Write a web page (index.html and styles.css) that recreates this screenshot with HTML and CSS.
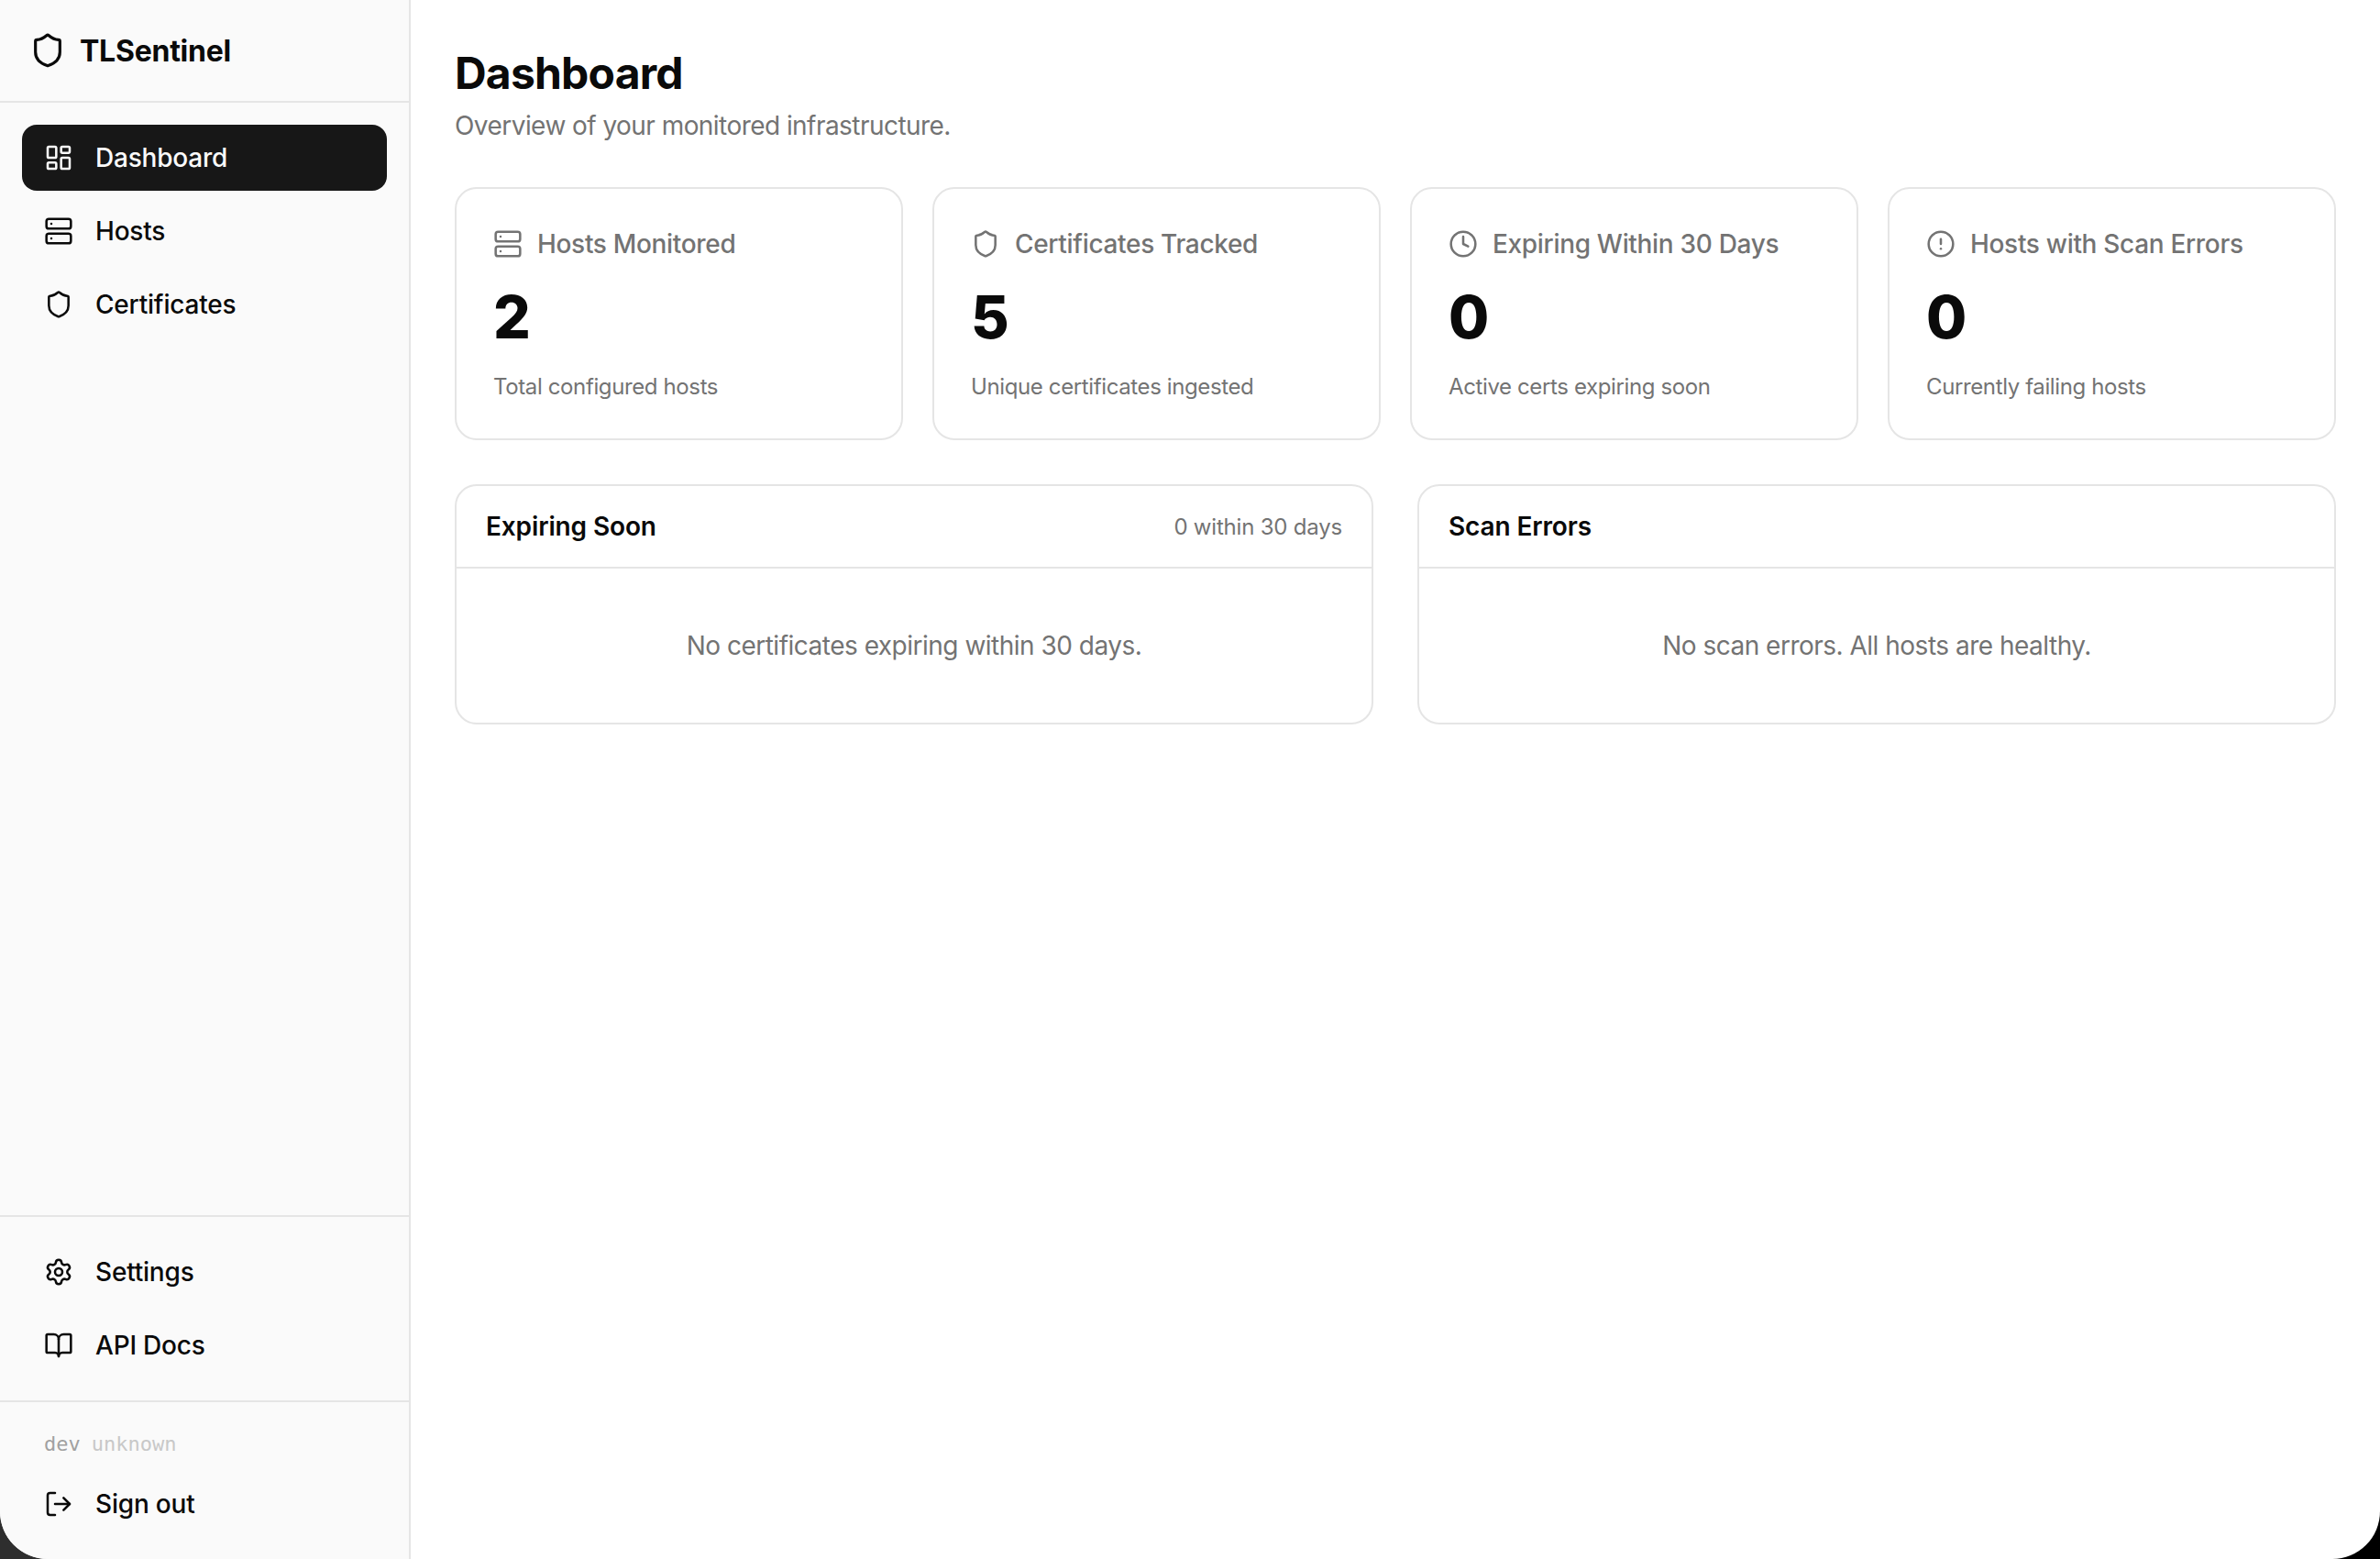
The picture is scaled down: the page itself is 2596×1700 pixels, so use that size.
FILE: index.html
```html
<!DOCTYPE html>
<html lang="en">
<head>
<meta charset="utf-8">
<title>TLSentinel</title>
<link rel="stylesheet" href="styles.css">
</head>
<body>
<svg class="sprite" aria-hidden="true">
  <symbol id="i-dashboard" viewBox="0 0 24 24"><rect width="7" height="9" x="3" y="3" rx="1"/><rect width="7" height="5" x="14" y="3" rx="1"/><rect width="7" height="9" x="14" y="12" rx="1"/><rect width="7" height="5" x="3" y="16" rx="1"/></symbol>
  <symbol id="i-server" viewBox="0 0 24 24"><rect width="20" height="8" x="2" y="2" rx="2"/><rect width="20" height="8" x="2" y="14" rx="2"/><line x1="6" x2="6.01" y1="6" y2="6"/><line x1="6" x2="6.01" y1="18" y2="18"/></symbol>
  <symbol id="i-shield" viewBox="0 0 24 24"><path d="M20 13c0 5-3.5 7.5-7.66 8.95a1 1 0 0 1-.67-.01C7.5 20.5 4 18 4 13V6a1 1 0 0 1 1-1c2 0 4.5-1.2 6.24-2.72a1.17 1.17 0 0 1 1.52 0C14.51 3.81 17 5 19 5a1 1 0 0 1 1 1z"/></symbol>
  <symbol id="i-clock" viewBox="0 0 24 24"><circle cx="12" cy="12" r="10"/><polyline points="12 6 12 12 16 14"/></symbol>
  <symbol id="i-alert" viewBox="0 0 24 24"><circle cx="12" cy="12" r="10"/><line x1="12" x2="12" y1="8" y2="12"/><line x1="12" x2="12.01" y1="16" y2="16"/></symbol>
  <symbol id="i-settings" viewBox="0 0 24 24"><path d="M9.671 4.136a2.34 2.34 0 0 1 4.659 0 2.34 2.34 0 0 0 3.319 1.915 2.34 2.34 0 0 1 2.33 4.033 2.34 2.34 0 0 0 0 3.831 2.34 2.34 0 0 1-2.33 4.033 2.34 2.34 0 0 0-3.319 1.915 2.34 2.34 0 0 1-4.659 0 2.34 2.34 0 0 0-3.32-1.915 2.34 2.34 0 0 1-2.33-4.033 2.34 2.34 0 0 0 0-3.831A2.34 2.34 0 0 1 6.35 6.051a2.34 2.34 0 0 0 3.319-1.915"/><circle cx="12" cy="12" r="3"/></symbol>
  <symbol id="i-book" viewBox="0 0 24 24"><path d="M12 7v14"/><path d="M3 18a1 1 0 0 1-1-1V4a1 1 0 0 1 1-1h5a4 4 0 0 1 4 4 4 4 0 0 1 4-4h5a1 1 0 0 1 1 1v13a1 1 0 0 1-1 1h-6a3 3 0 0 0-3 3 3 3 0 0 0-3-3z"/></symbol>
  <symbol id="i-logout" viewBox="0 0 24 24"><path d="m16 17 5-5-5-5"/><path d="M21 12H9"/><path d="M9 21H5a2 2 0 0 1-2-2V5a2 2 0 0 1 2-2h4"/></symbol>
</svg>
<div class="app">
  <aside class="sidebar">
    <div class="brand">
      <svg class="icon icon-brand"><use href="#i-shield"/></svg>
      <span class="brand-name">TLSentinel</span>
    </div>
    <nav class="nav nav-main">
      <a class="nav-item is-active"><svg class="icon"><use href="#i-dashboard"/></svg><span>Dashboard</span></a>
      <a class="nav-item"><svg class="icon"><use href="#i-server"/></svg><span>Hosts</span></a>
      <a class="nav-item"><svg class="icon"><use href="#i-shield"/></svg><span>Certificates</span></a>
    </nav>
    <nav class="nav nav-secondary">
      <a class="nav-item"><svg class="icon"><use href="#i-settings"/></svg><span>Settings</span></a>
      <a class="nav-item"><svg class="icon"><use href="#i-book"/></svg><span>API Docs</span></a>
    </nav>
    <div class="account">
      <div class="build"><span class="build-env">dev</span><span class="build-ver">unknown</span></div>
      <a class="nav-item"><svg class="icon"><use href="#i-logout"/></svg><span>Sign out</span></a>
    </div>
  </aside>
  <main class="main">
    <header class="page-head">
      <h1 class="page-title">Dashboard</h1>
      <p class="page-sub">Overview of your monitored infrastructure.</p>
    </header>
    <section class="stats">
      <article class="stat">
        <div class="stat-label"><svg class="icon"><use href="#i-server"/></svg><span>Hosts Monitored</span></div>
        <div class="stat-value">2</div>
        <div class="stat-desc">Total configured hosts</div>
      </article>
      <article class="stat">
        <div class="stat-label"><svg class="icon"><use href="#i-shield"/></svg><span>Certificates Tracked</span></div>
        <div class="stat-value">5</div>
        <div class="stat-desc">Unique certificates ingested</div>
      </article>
      <article class="stat">
        <div class="stat-label"><svg class="icon"><use href="#i-clock"/></svg><span>Expiring Within 30 Days</span></div>
        <div class="stat-value">0</div>
        <div class="stat-desc">Active certs expiring soon</div>
      </article>
      <article class="stat">
        <div class="stat-label"><svg class="icon"><use href="#i-alert"/></svg><span>Hosts with Scan Errors</span></div>
        <div class="stat-value">0</div>
        <div class="stat-desc">Currently failing hosts</div>
      </article>
    </section>
    <section class="panels">
      <article class="panel">
        <div class="panel-head"><h2 class="panel-title">Expiring Soon</h2><span class="panel-meta">0 within 30 days</span></div>
        <p class="panel-empty">No certificates expiring within 30 days.</p>
      </article>
      <article class="panel">
        <div class="panel-head"><h2 class="panel-title">Scan Errors</h2></div>
        <p class="panel-empty">No scan errors. All hosts are healthy.</p>
      </article>
    </section>
  </main>
</div>
</body>
</html>
```
FILE: styles.css
```css
* { box-sizing: border-box; }
html, body { margin: 0; height: 100%; }
body {
  background: linear-gradient(90deg, #2e2e2e 0, #2e2e2e 40px, #000 80px);
  color: #0a0a0a;
  font-family: "Inter", "Liberation Sans", sans-serif;
  overflow: hidden;
}
.sprite { display: none; }
.icon {
  width: 32px;
  height: 32px;
  flex: none;
  fill: none;
  stroke: currentColor;
  stroke-width: 1.9;
  stroke-linecap: round;
  stroke-linejoin: round;
}
.app {
  display: flex;
  height: 1700px;
  background: #fff;
  border-radius: 0 0 52px 52px;
  overflow: hidden;
}
.sidebar {
  width: 448px;
  flex: none;
  display: flex;
  flex-direction: column;
  background: #fafafa;
  border-right: 2px solid #e5e5e5;
}
.brand {
  height: 112px;
  display: flex;
  align-items: center;
  gap: 15px;
  padding: 0 32px;
  border-bottom: 2px solid #e5e5e5;
}
.icon-brand { width: 40px; height: 40px; }
.brand-name { font-size: 32px; font-weight: 650; letter-spacing: -0.25px; }
.nav { display: flex; flex-direction: column; gap: 8px; padding: 24px; }
.nav-main { flex: 1; }
.nav-secondary { border-top: 2px solid #e5e5e5; }
.nav-item {
  height: 72px;
  display: flex;
  align-items: center;
  gap: 24px;
  padding: 0 24px;
  border-radius: 16px;
  font-size: 28px;
  font-weight: 550;
  letter-spacing: -0.2px;
}
.nav-item.is-active { background: #171717; color: #fafafa; }
.account {
  border-top: 2px solid #e5e5e5;
  padding: 32px 24px 24px;
}
.build {
  display: flex;
  gap: 12px;
  padding: 0 24px 15px;
  font-family: "DejaVu Sans Mono", monospace;
  font-size: 22px;
  line-height: 28px;
}
.build-env { color: #a1a1a1; }
.build-ver { color: #c8c8c8; }
.main { flex: 1; min-width: 0; padding: 48px; }
.page-head { margin-bottom: 47px; }
.page-title { margin: 0; font-size: 48px; line-height: 64px; font-weight: 700; letter-spacing: -0.8px; }
.page-sub { margin: 5px 0 0; font-size: 28px; line-height: 40px; letter-spacing: -0.55px; color: #737373; }
.stats { display: grid; grid-template-columns: repeat(4, 1fr); gap: 32px; }
.stat {
  height: 276px;
  padding: 40px;
  border: 2px solid #e5e5e5;
  border-radius: 24px;
}
.stat-label {
  display: flex;
  align-items: center;
  gap: 16px;
  height: 40px;
  font-size: 28px;
  font-weight: 500;
  letter-spacing: -0.32px;
  color: #737373;
}
.stat-value { margin-top: 24px; font-size: 64px; line-height: 72px; font-weight: 800; }
.stat-desc { margin-top: 24px; font-size: 24px; line-height: 32px; letter-spacing: -0.38px; color: #737373; }
.panels { display: grid; grid-template-columns: repeat(2, 1fr); gap: 48px; margin-top: 48px; }
.panel { border: 2px solid #e5e5e5; border-radius: 24px; overflow: hidden; }
.panel-head {
  height: 90px;
  display: flex;
  align-items: center;
  justify-content: space-between;
  padding: 0 32px;
  border-bottom: 2px solid #e5e5e5;
}
.panel-title { margin: 0; font-size: 28px; font-weight: 600; letter-spacing: -0.13px; }
.panel-meta { font-size: 24px; letter-spacing: -0.2px; color: #737373; }
.panel-empty { margin: 0; padding: 64px 32px; line-height: 40px; font-size: 28px; letter-spacing: -0.5px; text-align: center; color: #737373; }
```
